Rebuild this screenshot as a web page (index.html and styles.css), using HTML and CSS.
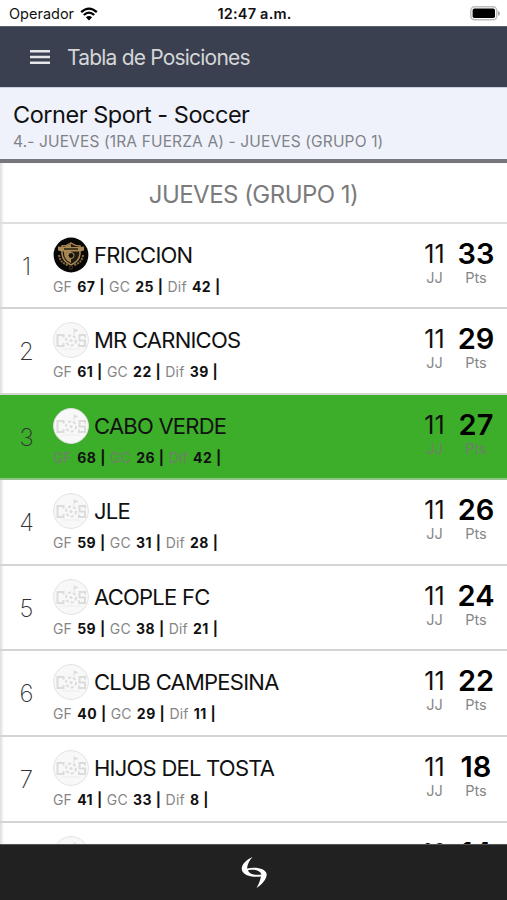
FILE: index.html
```html
<!DOCTYPE html>
<html lang="es">
<head>
  <meta charset="UTF-8" />
  <meta name="viewport" content="width=device-width, initial-scale=1" />
  <title>Tabla de Posiciones</title>
  <link rel="stylesheet" href="styles.css">
</head>
<body>
  <!-- shared team logos -->
  <svg class="defs" width="0" height="0">
    <symbol id="logo-default" viewBox="0 0 36 36">
      <circle cx="18" cy="18" r="17.4" fill="#f8f8f8" stroke="#e2e2e2" stroke-width="1" />
      <g fill="none" stroke="#dcdcdc" stroke-width="2">
        <path d="M10.500 15.500V13H4.500V24H10.500V21" />
        <path d="M32 15.500V13H26.500V18.500H32V24H26V21.500" />
        <circle cx="18" cy="18.500" r="5" stroke-dasharray="3 2" />
      </g>
      <path d="M21 13V6M21 7l4 1.500-4 1.500" fill="#ddd" stroke="#ddd" stroke-width=".7" />
      <circle cx="18" cy="18.500" r="1.600" fill="#ddd" />
      <path d="M9 27h18" stroke="#ececec" stroke-width="1" />
    </symbol>
    <symbol id="logo-friccion" viewBox="0 0 36 36">
      <circle cx="18" cy="18" r="17.400" fill="#090807" />
      <path d="M9 9q5 0 9-3 4 3 9 3v7q0 8-9 12-9-4-9-12z" fill="#221b12" stroke="#a98a55" stroke-width="1.500" />
      <path d="M18 7v19q-7-3-7-10v-6z" fill="#a58650" />
      <path d="M5 9.500l4 .5h18l4-.5v4l-4 1H9l-4-1z" fill="#a98a55" />
      <path d="M11 12h14" stroke="#2b2013" stroke-width="1.500" />
      <circle cx="18" cy="18.500" r="3" fill="#15110b" stroke="#b4945f" stroke-width="1" />
      <path d="M6 18q1 8 9 10M30 18q-1 8-9 10" fill="none" stroke="#876c40" stroke-width="2" stroke-dasharray="2 1" />
      <circle cx="18" cy="30.500" r="1.700" fill="none" stroke="#4b3c25" />
    </symbol>
  </svg>

  <div class="status">
    <div class="carrier">
      <span>Operador</span>
      <svg class="wifi" viewBox="0 0 18 14">
        <path d="M1.200 5.200Q9-2 16.800 5.200" />
        <path d="M3.800 8Q9 3.200 14.200 8" />
        <path d="M9 13.600L5.900 10.300Q9 7.600 12.100 10.300z" class="dot" />
      </svg>
    </div>
    <div class="clock">12:47 a.m.</div>
    <svg class="battery" viewBox="0 0 30 15">
      <rect x="0.800" y="0.800" width="26" height="13" rx="3.800" fill="#fff" stroke="#bdbdbd" stroke-width="1.500" />
      <rect x="2.600" y="2.600" width="22.400" height="9.400" rx="1.800" />
      <path d="M28 5q2 .8 2 2.400T28 9.800z" fill="#aaa" />
    </svg>
  </div>

  <header class="navbar">
    <svg class="menu" viewBox="0 0 20 14">
      <path d="M0 1.200h20M0 7h20M0 12.800h20" />
    </svg>
    <h1>Tabla de Posiciones</h1>
  </header>

  <div class="league">
    <h2>Corner Sport - Soccer</h2>
    <p>4.- JUEVES (1RA FUERZA A) - JUEVES (GRUPO 1)</p>
  </div>

  <main class="table">
    <div class="group"><span>JUEVES (GRUPO 1)</span></div>

    <div class="row">
      <div class="rank">1</div>
      <div class="team">
        <div class="name"><svg><use href="#logo-friccion" /></svg><span>FRICCION</span></div>
        <div class="stats">GF <b>67 |</b> GC <b>25 |</b> Dif <b>42 |</b></div>
      </div>
      <div class="games">11<small>JJ</small></div>
      <div class="points">33<small>Pts</small></div>
    </div>

    <div class="row">
      <div class="rank">2</div>
      <div class="team">
        <div class="name"><svg><use href="#logo-default" /></svg><span>MR CARNICOS</span></div>
        <div class="stats">GF <b>61 |</b> GC <b>22 |</b> Dif <b>39 |</b></div>
      </div>
      <div class="games">11<small>JJ</small></div>
      <div class="points">29<small>Pts</small></div>
    </div>

    <div class="row selected">
      <div class="rank">3</div>
      <div class="team">
        <div class="name"><svg><use href="#logo-default" /></svg><span>CABO VERDE</span></div>
        <div class="stats">GF <b>68 |</b> GC <b>26 |</b> Dif <b>42 |</b></div>
      </div>
      <div class="games">11<small>JJ</small></div>
      <div class="points">27<small>Pts</small></div>
    </div>

    <div class="row">
      <div class="rank">4</div>
      <div class="team">
        <div class="name"><svg><use href="#logo-default" /></svg><span>JLE</span></div>
        <div class="stats">GF <b>59 |</b> GC <b>31 |</b> Dif <b>28 |</b></div>
      </div>
      <div class="games">11<small>JJ</small></div>
      <div class="points">26<small>Pts</small></div>
    </div>

    <div class="row">
      <div class="rank">5</div>
      <div class="team">
        <div class="name"><svg><use href="#logo-default" /></svg><span>ACOPLE FC</span></div>
        <div class="stats">GF <b>59 |</b> GC <b>38 |</b> Dif <b>21 |</b></div>
      </div>
      <div class="games">11<small>JJ</small></div>
      <div class="points">24<small>Pts</small></div>
    </div>

    <div class="row">
      <div class="rank">6</div>
      <div class="team">
        <div class="name"><svg><use href="#logo-default" /></svg><span>CLUB CAMPESINA</span></div>
        <div class="stats">GF <b>40 |</b> GC <b>29 |</b> Dif <b>11 |</b></div>
      </div>
      <div class="games">11<small>JJ</small></div>
      <div class="points">22<small>Pts</small></div>
    </div>

    <div class="row">
      <div class="rank">7</div>
      <div class="team">
        <div class="name"><svg><use href="#logo-default" /></svg><span>HIJOS DEL TOSTA</span></div>
        <div class="stats">GF <b>41 |</b> GC <b>33 |</b> Dif <b>8 |</b></div>
      </div>
      <div class="games">11<small>JJ</small></div>
      <div class="points">18<small>Pts</small></div>
    </div>

    <div class="row">
      <div class="rank"></div>
      <div class="team">
        <div class="name"><svg><use href="#logo-default" /></svg></div>
      </div>
      <div class="games">10</div>
      <div class="points">14</div>
    </div>
  </main>

  <footer>
    <svg viewBox="0 0 28 34">
      <path d="M12.500 1C4 5 0 11 2.500 15.500 5 20 13 21.500 21 20.500 20 24.500 19 28 16.500 32 23 28 27.500 22 26.500 17.500 25.500 13 17 10.500 7 12.500 7.500 8 9.500 4 12.500 1zM8 14.200C14 13 20 14 21.500 18.600 15 19.500 9 18 8 14.200z" fill="#fff" fill-rule="evenodd" />
    </svg>
  </footer>
</body>
</html>
```

FILE: styles.css
```css
* {
  box-sizing: border-box;
}
body {
  font-family: Inter, Roboto, sans-serif;
  background: #fff;
  color: #111;
  margin: 0;
  height: 900px;
  display: flex;
  flex-direction: column;
  overflow: hidden;
}
h1, h2, p {
  margin: 0;
  font-weight: 400;
  white-space: nowrap;
}
.defs {
  position: absolute;
}
.status {
  flex: none;
  height: 26px;
  padding: 1px 7px 0 9px;
  display: grid;
  grid-template-columns: 1fr auto 1fr;
  align-items: center;
  font-size: 14.5px;
}
.carrier {
  display: flex;
  align-items: center;
  gap: 6px;
}
.wifi {
  width: 18px;
  height: 14px;
  fill: none;
  stroke: #000;
  stroke-width: 2.3;
}
.wifi .dot {
  fill: #000;
  stroke: none;
}
.clock {
  font-weight: 600;
  letter-spacing: 0.2px;
}
.battery {
  width: 30px;
  height: 15px;
  justify-self: end;
}
.navbar {
  flex: none;
  height: 61px;
  padding: 0 30px;
  display: flex;
  align-items: center;
  gap: 17px;
  background: #3a404f;
  border-top: 1px solid #5b606c;
  color: #d5d6d8;
}
.menu {
  width: 20px;
  height: 14px;
  stroke: #e4e5e7;
  stroke-width: 2.4;
}
.navbar h1 {
  font-size: 21px;
  letter-spacing: -0.8px;
}
.league {
  flex: none;
  height: 76px;
  padding: 13px 13px 0;
  background: #eff2fb;
  border-top: 1px solid #c9cfdd;
  border-bottom: 4px solid #77777b;
}
.league h2 {
  font-size: 23.5px;
  line-height: 28px;
  letter-spacing: -0.48px;
}
.league p {
  font-size: 15.5px;
  line-height: 25px;
  letter-spacing: 0.14px;
  color: #808287;
}
.table {
  flex: 1;
  min-height: 0;
  overflow: hidden;
  box-shadow: inset 3px 0 3px -1px #ddd;
}
.group {
  height: 60.5px;
  padding-top: 5px;
  border-bottom: 2px solid #dedede;
  display: flex;
  align-items: center;
  justify-content: center;
  font-size: 24px;
  letter-spacing: -0.53px;
  color: #7b7b7b;
}
.row {
  height: 85.6px;
  padding-right: 10px;
  border-bottom: 2px solid #d4d4d4;
  display: grid;
  grid-template-columns: 53px 1fr 41px 42px;
}
.selected {
  background: #3cae29;
  border-bottom-color: #8fc486;
}
.rank {
  padding-top: 28px;
  text-align: center;
  font-size: 24px;
  line-height: 30px;
  font-weight: 200;
  color: #333;
}
.team {
  padding-top: 13px;
}
.name {
  height: 36px;
  display: flex;
  align-items: center;
  gap: 5px;
  font-size: 22px;
  letter-spacing: -0.76px;
  white-space: nowrap;
}
.name svg {
  width: 36px;
  height: 36px;
}
.stats {
  margin-top: 4px;
  font-size: 14px;
  line-height: 20px;
  letter-spacing: 0.17px;
  color: #868686;
  white-space: nowrap;
}
.stats b {
  color: #111;
  margin-left: 1px;
  letter-spacing: 0.5px;
}
.games, .points {
  padding-top: 14px;
  text-align: center;
  font-size: 25px;
  line-height: 32px;
}
.points {
  font-size: 29px;
  font-weight: 600;
  color: #000;
}
.row small {
  display: block;
  font-size: 14.5px;
  line-height: 16px;
  font-weight: 400;
  color: #868686;
}
.selected .stats, .selected small {
  color: #717e6d;
}
footer {
  flex: none;
  height: 56px;
  background: #212121;
  border-top: 1px solid #555;
  display: flex;
  align-items: center;
  justify-content: center;
}
footer svg {
  width: 28px;
  height: 34px;
}
```
